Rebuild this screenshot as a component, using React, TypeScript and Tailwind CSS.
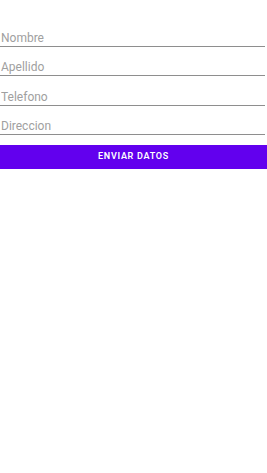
import React from 'react';

const fields = ['Nombre', 'Apellido', 'Telefono', 'Direccion'];

const App: React.FC = () => {
  return (
    <div className="min-h-[473px] w-[267px] bg-white pt-[17px]" style={{ fontFamily: 'Roboto, sans-serif' }}>
      <div className="flex flex-col w-[265px]">
        {fields.map((f) => (
          <div key={f} className="h-[29.5px] flex items-end border-b border-[#8e8e8e] pl-[1px] pb-[1px]">
            <input
              placeholder={f}
              className="w-full bg-transparent text-[12px] leading-[14px] text-[#555] placeholder:text-[#a0a0a0] outline-none"
            />
          </div>
        ))}
      </div>
      <button className="mt-[10px] h-[24px] w-full bg-[#6200ee] text-white text-[9px] font-semibold tracking-[0.08em] uppercase">
        Enviar datos
      </button>
    </div>
  );
};

export default App;
